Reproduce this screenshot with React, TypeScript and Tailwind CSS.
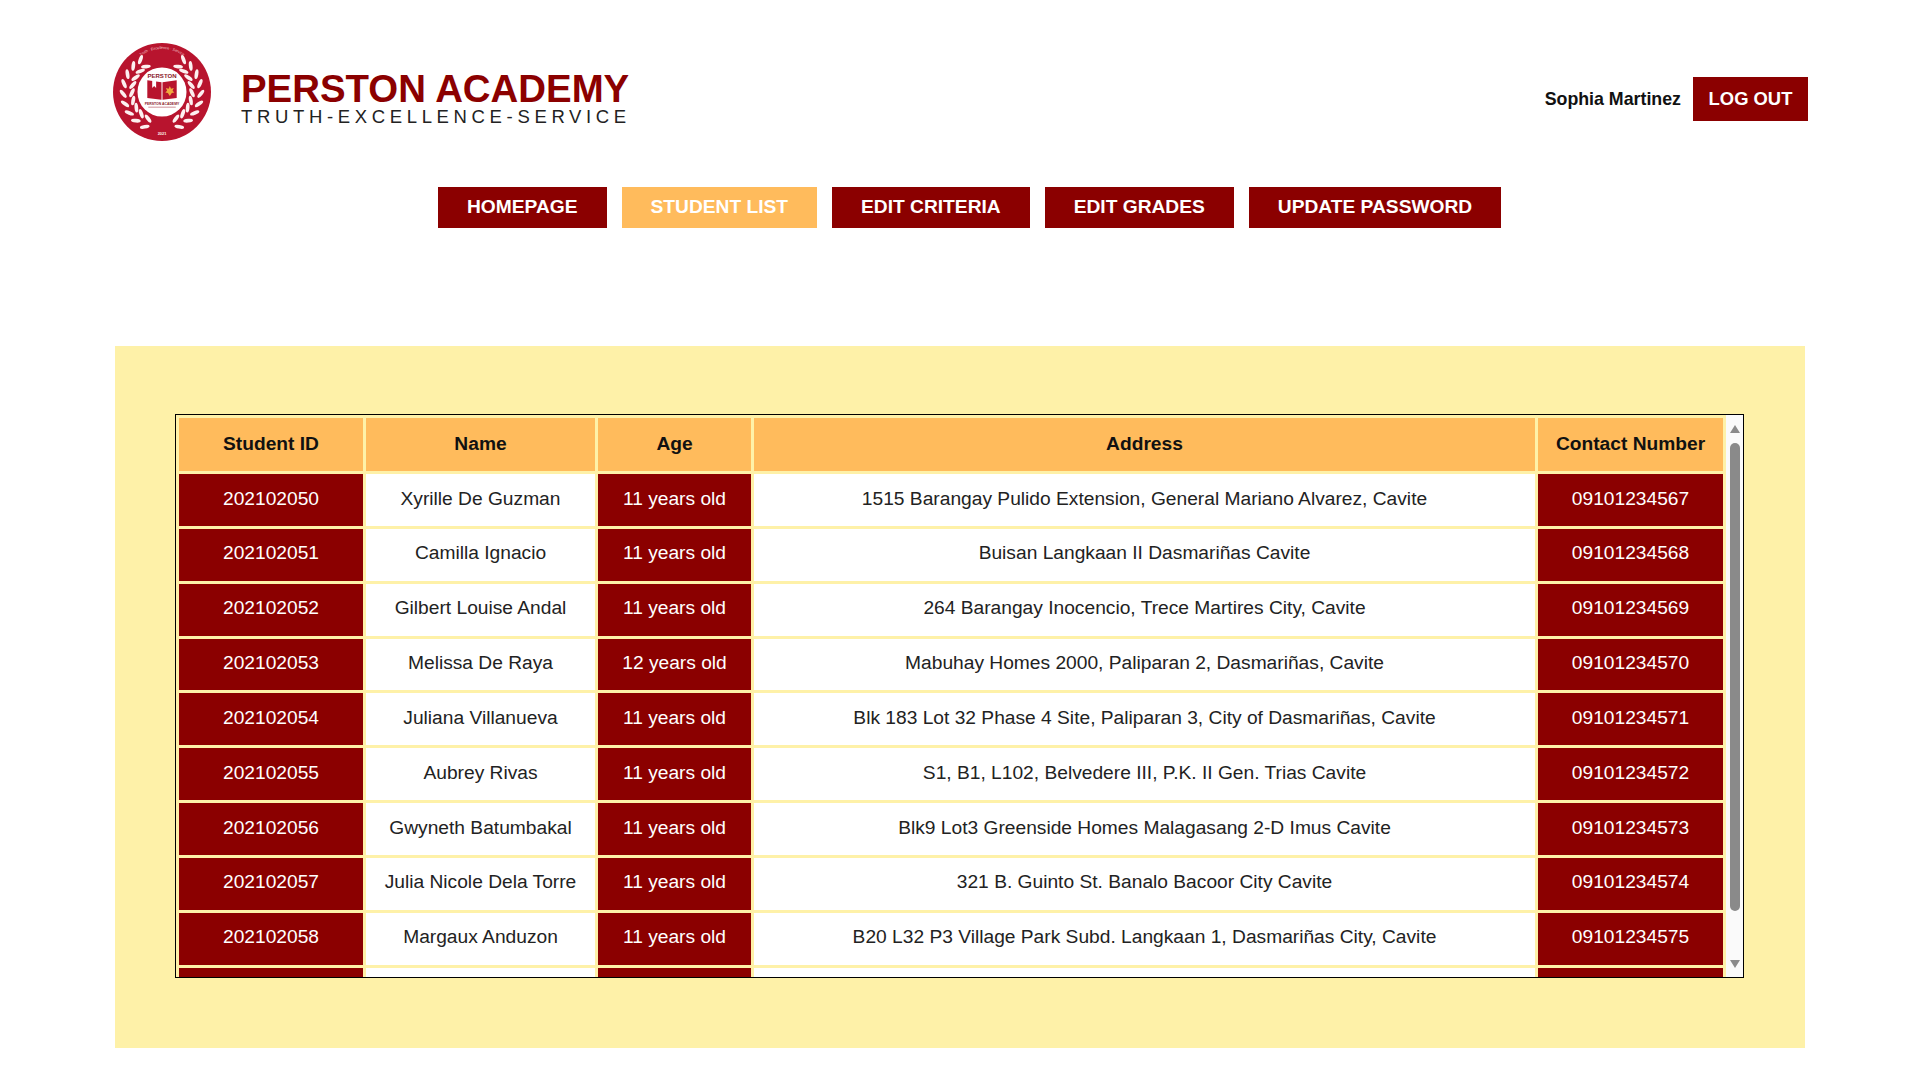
const students = [
  ["202102050", "Xyrille De Guzman", "11 years old", "1515 Barangay Pulido Extension, General Mariano Alvarez, Cavite", "09101234567"],
  ["202102051", "Camilla Ignacio", "11 years old", "Buisan Langkaan II Dasmariñas Cavite", "09101234568"],
  ["202102052", "Gilbert Louise Andal", "11 years old", "264 Barangay Inocencio, Trece Martires City, Cavite", "09101234569"],
  ["202102053", "Melissa De Raya", "12 years old", "Mabuhay Homes 2000, Paliparan 2, Dasmariñas, Cavite", "09101234570"],
  ["202102054", "Juliana Villanueva", "11 years old", "Blk 183 Lot 32 Phase 4 Site, Paliparan 3, City of Dasmariñas, Cavite", "09101234571"],
  ["202102055", "Aubrey Rivas", "11 years old", "S1, B1, L102, Belvedere III, P.K. II Gen. Trias Cavite", "09101234572"],
  ["202102056", "Gwyneth Batumbakal", "11 years old", "Blk9 Lot3 Greenside Homes Malagasang 2-D Imus Cavite", "09101234573"],
  ["202102057", "Julia Nicole Dela Torre", "11 years old", "321 B. Guinto St. Banalo Bacoor City Cavite", "09101234574"],
  ["202102058", "Margaux Anduzon", "11 years old", "B20 L32 P3 Village Park Subd. Langkaan 1, Dasmariñas City, Cavite", "09101234575"],
  // the row that is scrolled out of view, only its top edge shows
  ["", "", "", "", ""],
];

const navItems = ["HOMEPAGE", "STUDENT LIST", "EDIT CRITERIA", "EDIT GRADES", "UPDATE PASSWORD"];

const leafAngles = [158, 142, 127, 112, 97, 82, 67, 52, 38];

const LaurelBranch = () => (
  <g fill="#fdf0f0">
    {leafAngles.map((a) => (
      <g key={a} transform={`rotate(${a} 50 50)`}>
        <ellipse cx="47" cy="10.5" rx="5" ry="1.9" transform="rotate(32 47 10.5)" />
        <ellipse cx="47" cy="19.5" rx="5" ry="1.9" transform="rotate(-32 47 19.5)" />
      </g>
    ))}
  </g>
);

const Logo = () => (
  <svg viewBox="0 0 100 100" className="w-[98px] h-[98px] shrink-0">
    <defs>
      <path id="topArc" d="M14 50 A36 36 0 0 1 86 50" transform="translate(0 -8) scale(1 1)" />
    </defs>
    <circle cx="50" cy="50" r="50" fill="#b8142e" />
    <LaurelBranch />
    <g transform="translate(100 0) scale(-1 1)">
      <LaurelBranch />
    </g>
    <circle cx="50" cy="50" r="25" fill="#ffffff" />
    <text fontSize="3.8" fill="#f6c9cf" fontFamily="Liberation Sans" textAnchor="middle">
      <textPath href="#topArc" startOffset="50%">Truth · Excellence · Service</textPath>
    </text>
    <text x="50" y="36" textAnchor="middle" fontSize="6.2" fontWeight="700" fill="#8b1a2b" fontFamily="Liberation Sans">PERSTON</text>
    <path d="M35 38 L49.5 40 V58 L35 56 Z" fill="#b8142e" />
    <path d="M50.5 40 L65 38 V56 L50.5 58 Z" fill="#b8142e" />
    <path d="M40 38.6 H44 V46 L42 44 L40 46 Z" fill="#ffffff" />
    <path d="M58 44 L59.2 46.6 L62 46 L60.8 48.6 L62.6 50.6 L60 51 L58 54 L56 51 L53.4 50.6 L55.2 48.6 L54 46 L56.8 46.6 Z" fill="#f0a93f" />
    <text x="50" y="63" textAnchor="middle" fontSize="3.5" fontWeight="700" fill="#8b1a2b" fontFamily="Liberation Sans">PERSTON ACADEMY</text>
    <rect x="36" y="65" width="28" height="0.9" fill="#c9808a" />
    <text x="50" y="94" textAnchor="middle" fontSize="4" fontWeight="700" fill="#fdf0f0" fontFamily="Liberation Sans">2021</text>
  </svg>
);

export default function App() {
  return (
    <div className="min-h-screen bg-white font-['Liberation_Sans',Arial,sans-serif] text-[#111]">
      <header className="flex items-center justify-between pl-[113px] pr-[112px] pt-[43px]">
        <div className="flex items-center gap-[30px]">
          <Logo />
          <div className="flex flex-col pt-[8px]">
            <span className="text-[38.4px] leading-[40px] font-bold text-[#8b0000]">PERSTON ACADEMY</span>
            <span className="text-[18.5px] leading-[15px] tracking-[4.65px] text-[#222]">TRUTH-EXCELLENCE-SERVICE</span>
          </div>
        </div>
        <div className="mt-[13px] flex items-center gap-3">
          <span className="pt-px text-[17.8px] font-bold">Sophia Martinez</span>
          <button className="h-[44px] w-[115px] bg-[#8b0000] pt-px text-[18.4px] font-bold text-white">LOG OUT</button>
        </div>
      </header>

      <nav className="mt-[46px] ml-[438px] flex gap-[15px]">
        {navItems.map((item) => (
          <button
            key={item}
            className={`h-[41px] px-[29px] text-[19.2px] font-bold text-white ${item === "STUDENT LIST" ? "bg-[#ffbb5c]" : "bg-[#8b0000]"}`}
          >
            {item}
          </button>
        ))}
      </nav>

      <main className="mt-[118px] ml-[115px] w-[1690px] h-[702px] bg-[#fef1a8] pt-[68px] pl-[60px]">
        <div className="flex h-[564px] w-[1569px] border border-black bg-[#fef1a8]">
          <div className="flex-1 overflow-hidden">
            <table className="w-full table-fixed border-separate border-spacing-[3px] bg-[#fef1a8] text-[19.2px]">
              <colgroup>
                <col className="w-[184px]" />
                <col className="w-[229px]" />
                <col className="w-[153px]" />
                <col />
                <col className="w-[185px]" />
              </colgroup>
              <thead>
                <tr className="h-[53px] bg-[#ffbb5c] font-bold">
                  <th>Student ID</th>
                  <th>Name</th>
                  <th>Age</th>
                  <th>Address</th>
                  <th>Contact Number</th>
                </tr>
              </thead>
              <tbody className="text-center">
                {students.map((s, i) => (
                  <tr key={i} className="h-[51.85px]">
                    <td className="bg-[#8b0000] pb-[2px] text-white">{s[0]}</td>
                    <td className="bg-white pb-[2px] text-[#222]">{s[1]}</td>
                    <td className="bg-[#8b0000] pb-[2px] text-white">{s[2]}</td>
                    <td className="bg-white pb-[2px] text-[#222]">{s[3]}</td>
                    <td className="bg-[#8b0000] pb-[2px] text-white">{s[4]}</td>
                  </tr>
                ))}
              </tbody>
            </table>
          </div>
          {/* scrollbar */}
          <div className="flex w-[17px] flex-col items-center bg-[#fafafa] pt-[10px] pb-[9px]">
            <div className="h-0 w-0 border-x-[5px] border-b-[8px] border-x-transparent border-b-[#8a8a8a]" />
            <div className="mt-[10px] flex-1 w-[10px] rounded-full bg-[#8a8a8a]" />
            <div className="mt-[49px] h-0 w-0 border-x-[5px] border-t-[8px] border-x-transparent border-t-[#8a8a8a]" />
          </div>
        </div>
      </main>
    </div>
  );
}
